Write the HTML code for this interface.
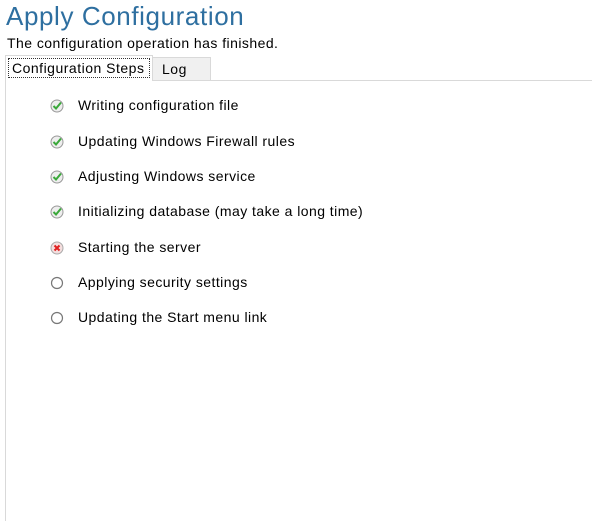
<!DOCTYPE html>
<html><head><meta charset="utf-8"><style>
body{margin:0;width:592px;height:511px;background:#fff;position:relative;overflow:hidden;font-family:"Liberation Sans",sans-serif;color:#000}
.t{position:absolute;left:6px;top:1px;font-size:26px;color:#2e6fa0;letter-spacing:0.6px}
.s{position:absolute;left:7px;top:35px;font-size:14px;letter-spacing:0.45px}
.panel{position:absolute;left:5px;top:80px;width:600px;height:440px;border-left:1px solid #d9d9d9;border-top:1px solid #d9d9d9}
.tab1{position:absolute;left:5px;top:55px;width:148px;height:26px;background:#fff;border:1px solid #d9d9d9;border-bottom:none;box-sizing:border-box}
.tab1 span{position:absolute;left:2px;top:2px;width:142px;height:20px;border:1px dotted #333;box-sizing:border-box;font-size:14px;letter-spacing:0.5px;line-height:18px;padding-left:3px;white-space:nowrap}
.tab2{position:absolute;left:153px;top:57px;width:58px;height:23px;background:#f0f0f0;border:1px solid #d9d9d9;border-left:none;border-bottom:none;box-sizing:border-box;font-size:14px;letter-spacing:0.5px;padding:3px 0 0 9px}
.i{position:absolute;left:50px;width:14px;height:14px}
.l{position:absolute;left:78px;font-size:14px;letter-spacing:0.45px}
</style></head><body>
<div class="t">Apply Configuration</div>
<div class="s">The configuration operation has finished.</div>
<div class="panel"></div>
<div class="tab2">Log</div>
<div class="tab1"><span>Configuration Steps</span></div>

<svg class="i" style="top:99px" viewBox="0 0 14 14"><circle cx="7" cy="7" r="6" fill="#eee" stroke="#999"/><path d="M3.5 7l2.5 2.5 5-6" fill="none" stroke="#3aa83a" stroke-width="2"/></svg>
<div class="l" style="top:97px">Writing configuration file</div>
<svg class="i" style="top:135px" viewBox="0 0 14 14"><circle cx="7" cy="7" r="6" fill="#eee" stroke="#999"/><path d="M3.5 7l2.5 2.5 5-6" fill="none" stroke="#3aa83a" stroke-width="2"/></svg>
<div class="l" style="top:133px">Updating Windows Firewall rules</div>
<svg class="i" style="top:170px" viewBox="0 0 14 14"><circle cx="7" cy="7" r="6" fill="#eee" stroke="#999"/><path d="M3.5 7l2.5 2.5 5-6" fill="none" stroke="#3aa83a" stroke-width="2"/></svg>
<div class="l" style="top:168px">Adjusting Windows service</div>
<svg class="i" style="top:205px" viewBox="0 0 14 14"><circle cx="7" cy="7" r="6" fill="#eee" stroke="#999"/><path d="M3.5 7l2.5 2.5 5-6" fill="none" stroke="#3aa83a" stroke-width="2"/></svg>
<div class="l" style="top:203px">Initializing database (may take a long time)</div>
<svg class="i" style="top:241px" viewBox="0 0 14 14"><circle cx="7" cy="7" r="6" fill="#f4dede" stroke="#aaa"/><path d="M4.5 4.5l5 5M9.5 4.5l-5 5" stroke="#e02020" stroke-width="2"/></svg>
<div class="l" style="top:239px">Starting the server</div>
<svg class="i" style="top:276px" viewBox="0 0 14 14"><circle cx="7" cy="7" r="5.5" fill="#fff" stroke="#777" stroke-width="1.2"/></svg>
<div class="l" style="top:274px">Applying security settings</div>
<svg class="i" style="top:311px" viewBox="0 0 14 14"><circle cx="7" cy="7" r="5.5" fill="#fff" stroke="#777" stroke-width="1.2"/></svg>
<div class="l" style="top:309px">Updating the Start menu link</div>
</body></html>
